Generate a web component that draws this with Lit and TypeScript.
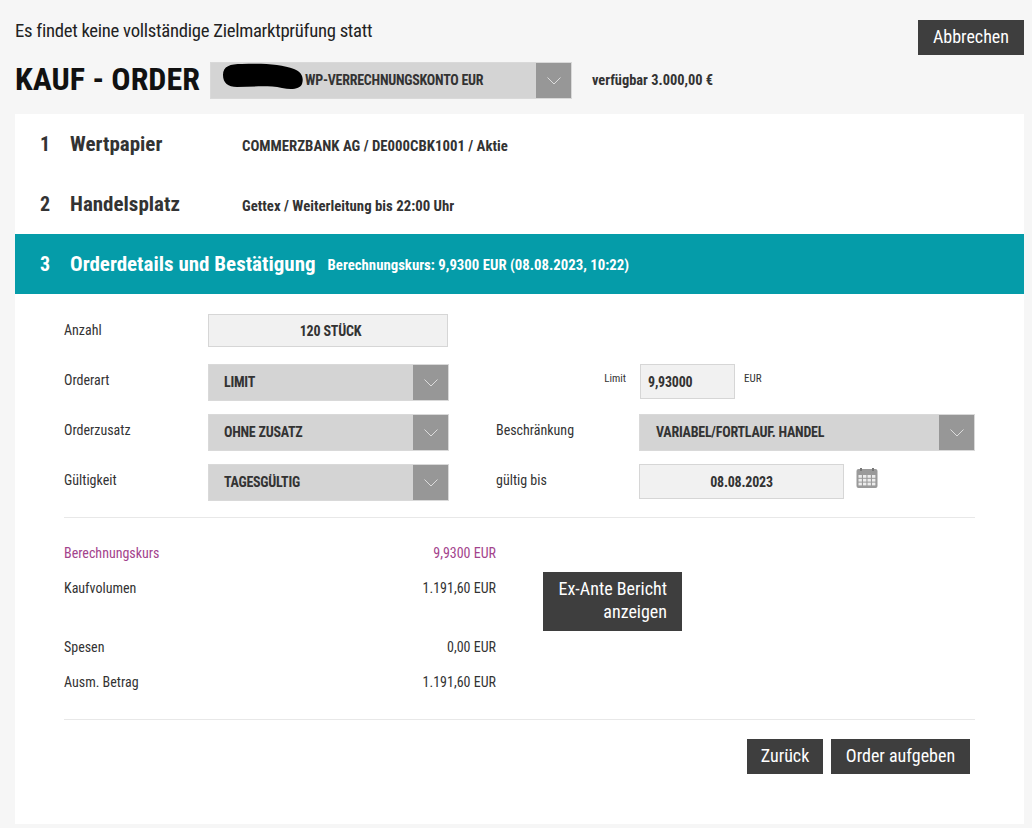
import { LitElement, html, css, svg } from "lit";
import { customElement } from "lit/decorators.js";

const chevron = html`<span class="arrow"><svg width="14" height="8" viewBox="0 0 14 8"><path d="M.5.5 7 7 13.5.5" fill="none" stroke="#eee" stroke-width=".8"/></svg></span>`;

const calCells = [0, 1, 2, 3].flatMap((c) => [0, 1, 2].map((r) => svg`<rect x=${2.5 + c * 4.5} y=${7 + r * 3.8} width="3.4" height="2.8" fill="#ececec"/>`));

@customElement("app-root")
export class AppRoot extends LitElement {
  static styles = css`
    :host { display: block; width: 1032px; height: 828px; background: #f6f6f6; color: #333; overflow: hidden;
      font-family: Roboto, "Liberation Sans", sans-serif; font-stretch: 75%; }
    * { box-sizing: border-box; }
    .top { height: 114px; padding: 20px 8px 0 15px; display: flex; justify-content: space-between; align-items: flex-start; }
    .notice { font-size: 18.7px; letter-spacing: -0.28px; line-height: 22px; color: #222; }
    .titlerow { display: flex; align-items: center; margin-top: 20px; }
    h1 { margin: 0; font-size: 32px; line-height: 34px; padding-bottom: 3px; font-weight: 700; color: #111; width: 195px; white-space: nowrap; }
    .account { width: 362px; height: 37px; padding-left: 94px; }
    .avail { margin-left: 20px; font-size: 14.4px; font-weight: 700; }
    .select { display: flex; align-items: center; justify-content: space-between; position: relative; background: #d4d4d4; border: 1px solid #d9d9d9; font-weight: 700; color: #333; font-size: 14px; letter-spacing: -0.25px; }
    .select .label { padding-left: 15px; padding-bottom: 1px; }
    .select.wide .label { padding-left: 16px; }
    .account .label { padding-left: 0; }
    .blob { position: absolute; left: 11px; top: 0; display: block; }
    .arrow { width: 35px; align-self: stretch; background: #979797; display: flex; align-items: center; justify-content: center; }
    .btn { display: inline-flex; align-items: center; justify-content: center; background: #3e3e3e; color: #fff; font-size: 18px; line-height: 23px; height: 35px; border: 0; font-family: inherit; font-stretch: inherit; font-weight: 400; padding: 0 0 2px; }
    .cancel { width: 106px; }
    .panel { margin: 0 8px 0 15px; background: #fff; height: 710px; }
    .step { height: 60px; padding-left: 25px; display: flex; align-items: center; }
    .num { width: 30px; font-size: 20px; font-weight: 700; }
    .name { width: 172px; font-size: 21px; font-weight: 700; white-space: nowrap; }
    .desc { font-size: 14.8px; font-weight: 700; padding-top: 3px; }
    .step.active { background: #059ca9; color: #fff; }
    .step.active .name { width: auto; margin-right: 12px; }
    .step.active .desc { padding-top: 2px; }
    .body { padding: 20px 49px 0; }
    .form { display: grid; grid-template-columns: 144px 241px 47px 143px 336px; grid-auto-rows: 50px; font-size: 14px; align-items: start; }
    .lbl { line-height: 33px; }
    .field { background: #f1f1f1; border: 1px solid #d6d6d6; display: flex; align-items: center; justify-content: center; font-weight: 700; font-size: 14px; letter-spacing: -0.2px; }
    .qty { width: 240px; height: 33px; padding-left: 5px; }
    .ctl { width: 241px; height: 37px; }
    .wide { width: 336px; }
    .limitwrap { grid-column: 3 / 6; display: flex; align-items: flex-start; }
    .limitlbl { width: 192px; font-size: 11px; line-height: 30px; text-align: right; padding-right: 15px; }
    .limitinput { width: 95px; height: 35px; justify-content: flex-start; padding-left: 7px; margin-left: -1px; }
    .unit { font-size: 11px; line-height: 30px; margin-left: 9px; }
    .date { display: flex; align-items: flex-start; gap: 12px; }
    .dateinput { width: 205px; height: 35px; }
    .cal { margin-top: 4px; display: block; }
    hr { border: 0; border-top: 1px solid #e8e8e8; margin: 0; }
    .rule1 { margin-top: 3px; }
    .sum { display: grid; grid-template-columns: 432px auto; column-gap: 47px; height: 201px; padding-top: 18px; font-size: 14px; align-items: start; }
    .lines { display: flex; flex-direction: column; }
    .line { display: flex; justify-content: space-between; line-height: 35px; height: 35px; }
    .line.gap { margin-bottom: 24px; }
    .line.hl { color: #a3438c; }
    .ex { width: 139px; height: 59px; text-align: right; justify-content: flex-end; margin-top: 36px; padding: 0 15px 4px 5px; }
    .foot { display: flex; justify-content: flex-end; gap: 8px; padding: 19px 5px 0 0; }
    .z { width: 76px; }
    .o { width: 139px; }
  `;

  render() {
    const sel = (t: string, cls = "ctl") => html`<div class="select ${cls}"><span class="label">${t}</span>${chevron}</div>`;
    return html`
      <div class="top">
        <div>
          <div class="notice">Es findet keine vollständige Zielmarktprüfung statt</div>
          <div class="titlerow">
            <h1>KAUF - ORDER</h1>
            <div class="select account">
              <svg class="blob" width="82" height="27" viewBox="0 0 82 27"><path d="M1 12C1 3 8 1 20 1 40 0 60 1 72 6 80 9 82 15 80 21 78 26 70 27 60 25 45 22 30 24 15 24 6 24 1 20 1 12Z" fill="#000"/></svg>
              <span class="label">WP-VERRECHNUNGSKONTO EUR</span>${chevron}
            </div>
            <div class="avail">verfügbar 3.000,00 €</div>
          </div>
        </div>
        <button class="btn cancel">Abbrechen</button>
      </div>
      <div class="panel">
        <div class="step"><span class="num">1</span><span class="name">Wertpapier</span><span class="desc">COMMERZBANK AG / DE000CBK1001 / Aktie</span></div>
        <div class="step"><span class="num">2</span><span class="name">Handelsplatz</span><span class="desc">Gettex / Weiterleitung bis 22:00 Uhr</span></div>
        <div class="step active"><span class="num">3</span><span class="name">Orderdetails und Bestätigung</span><span class="desc">Berechnungskurs: 9,9300 EUR (08.08.2023, 10:22)</span></div>
        <div class="body">
          <div class="form">
            <div class="lbl">Anzahl</div><div class="field qty">120 STÜCK</div><div></div><div></div><div></div>
            <div class="lbl">Orderart</div>${sel("LIMIT")}
            <div class="limitwrap"><span class="limitlbl">Limit</span><div class="field limitinput">9,93000</div><span class="unit">EUR</span></div>
            <div class="lbl">Orderzusatz</div>${sel("OHNE ZUSATZ")}<div></div>
            <div class="lbl">Beschränkung</div>${sel("VARIABEL/FORTLAUF. HANDEL", "ctl wide")}
            <div class="lbl">Gültigkeit</div>${sel("TAGESGÜLTIG")}<div></div>
            <div class="lbl">gültig bis</div>
            <div class="date"><div class="field dateinput">08.08.2023</div>
              <svg class="cal" width="22" height="20" viewBox="0 0 22 20"><rect x="0.5" y="1" width="21" height="19" rx="2" fill="#9a9a9a"/><rect x="4" y="0" width="2" height="3" fill="#777"/><rect x="16" y="0" width="2" height="3" fill="#777"/>${calCells}</svg>
            </div>
          </div>
          <hr class="rule1" />
          <div class="sum">
            <div class="lines">
              <div class="line hl"><span>Berechnungskurs</span><span>9,9300 EUR</span></div>
              <div class="line gap"><span>Kaufvolumen</span><span>1.191,60 EUR</span></div>
              <div class="line"><span>Spesen</span><span>0,00 EUR</span></div>
              <div class="line"><span>Ausm. Betrag</span><span>1.191,60 EUR</span></div>
            </div>
            <button class="btn ex">Ex-Ante Bericht anzeigen</button>
          </div>
          <hr />
          <div class="foot"><button class="btn z">Zurück</button><button class="btn o">Order aufgeben</button></div>
        </div>
      </div>
    `;
  }
}
